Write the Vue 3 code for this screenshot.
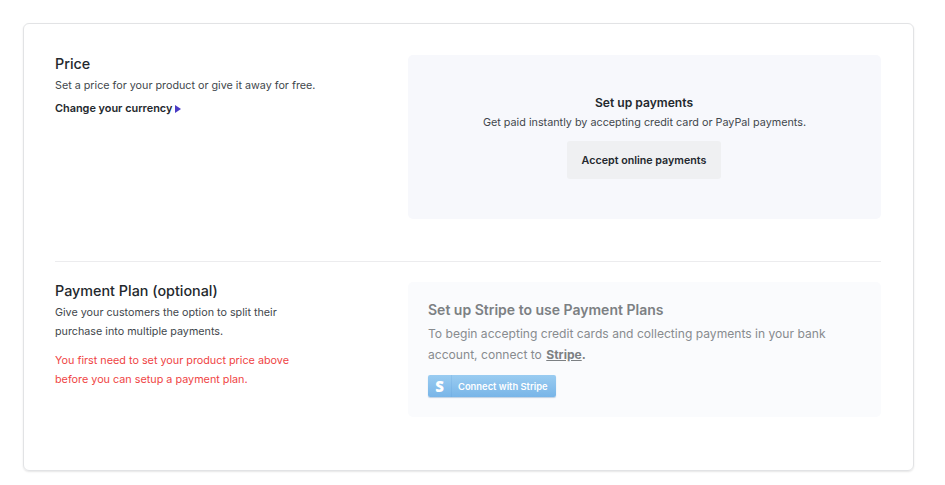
<script setup>
</script>

<template>
  <main class="page">
    <section class="card">
      <div class="row row-price">
        <div class="intro">
          <h2 class="title">Price</h2>
          <p class="text">Set a price for your product or give it away for free.</p>
          <a class="currency">Change your currency<svg class="caret" width="6" height="8" viewBox="0 0 6 8"><path d="M0 0L6 4L0 8Z" fill="#4b3bc4" /></svg></a>
        </div>
        <div class="panel panel-pay">
          <h3 class="pay-title">Set up payments</h3>
          <p class="pay-text">Get paid instantly by accepting credit card or PayPal payments.</p>
          <button class="accept">Accept online payments</button>
        </div>
      </div>
      <hr class="divider" />
      <div class="row row-plan">
        <div class="intro">
          <h2 class="title">Payment Plan (optional)</h2>
          <p class="text tall">Give your customers the option to split their<br />purchase into multiple payments.</p>
          <p class="text tall warn">You first need to set your product price above<br />before you can setup a payment plan.</p>
        </div>
        <div class="panel panel-stripe">
          <h3 class="stripe-title">Set up Stripe to use Payment Plans</h3>
          <p class="stripe-text">To begin accepting credit cards and collecting payments in your bank account, connect to <a class="stripe-link">Stripe</a><b class="dot">.</b></p>
          <button class="connect">
            <span class="s-mark">S</span>
            <span class="connect-label">Connect with Stripe</span>
          </button>
        </div>
      </div>
    </section>
  </main>
</template>

<style scoped>
.page {
  width: 945px;
  height: 485px;
  box-sizing: border-box;
  padding: 23px 31px 14px 23px;
  font-family: Inter, "Noto Sans", sans-serif;
  background: #fff;
  color: #23282d;
}
.card {
  height: 448px;
  box-sizing: border-box;
  border: 1px solid #e2e3e5;
  border-radius: 6px;
  box-shadow: 0 1px 2px rgba(0, 0, 0, 0.1);
  padding: 31px 32px 0 31px;
}
.row {
  display: grid;
  grid-template-columns: 353px 473px;
}
.title {
  margin: 0;
  font-size: 14.35px;
  line-height: 17px;
  font-weight: 500;
  color: #23282d;
}
.text {
  margin: 5px 0 0;
  font-size: 10.75px;
  line-height: 17px;
  color: #42474c;
}
.text.tall {
  margin-top: 4px;
  line-height: 19px;
}
.text.warn {
  color: #ef4444;
  margin-top: 10px;
  font-size: 10.8px;
}
.currency {
  display: flex;
  align-items: center;
  margin-top: 6px;
  font-size: 10.9px;
  line-height: 17px;
  font-weight: 600;
  color: #23282d;
}
.caret {
  margin-left: 3px;
}
.panel {
  border-radius: 5px;
}
.panel-pay {
  height: 164px;
  box-sizing: border-box;
  background: #f7f8fc;
  padding-top: 40px;
  display: flex;
  flex-direction: column;
  align-items: center;
}
.pay-title {
  margin: 0 1px 0 0;
  font-size: 12.1px;
  line-height: 15px;
  font-weight: 600;
  color: #23282d;
}
.pay-text {
  margin: 4px 0 0;
  font-size: 10.8px;
  line-height: 17px;
  color: #42474c;
}
.accept {
  margin: 10px 1px 0 0;
  width: 154px;
  height: 38px;
  border: 0;
  border-radius: 3px;
  background: #eff0f2;
  font-family: inherit;
  font-size: 10.7px;
  font-weight: 600;
  color: #23282d;
}
.divider {
  margin: 42px 0 20px;
  border: 0;
  border-top: 1px solid #ececee;
}
.panel-stripe {
  height: 135px;
  box-sizing: border-box;
  background: #fafbfd;
  padding: 19px 20px 0;
}
.stripe-title {
  margin: 0;
  font-size: 14px;
  line-height: 18px;
  font-weight: 600;
  color: #7c8083;
}
.stripe-text {
  margin: 4px 0 0;
  font-size: 12.1px;
  line-height: 21px;
  color: #888b8f;
}
.stripe-link {
  margin-left: 1px;
  font-weight: 700;
  text-decoration: underline;
  color: #7c8083;
}
.dot {
  font-weight: 700;
  color: #7c8083;
}
.connect {
  display: flex;
  align-items: center;
  margin-top: 10px;
  width: 128px;
  height: 22px;
  padding: 0;
  border: 0;
  border-radius: 2px;
  background: linear-gradient(#9accf1, #78b5e8);
  box-shadow: 0 1px 1px rgba(80, 130, 180, 0.35);
  font-family: inherit;
  color: #fff;
}
.s-mark {
  width: 24px;
  height: 22px;
  line-height: 22px;
  flex: none;
  text-align: center;
  font-family: "Open Sans", sans-serif;
  font-size: 15px;
  font-weight: 800;
  border-right: 1px solid rgba(90, 150, 210, 0.18);
  box-sizing: border-box;
}
.connect-label {
  margin-left: 6px;
  font-size: 9.4px;
  font-weight: 600;
  white-space: nowrap;
}
</style>
